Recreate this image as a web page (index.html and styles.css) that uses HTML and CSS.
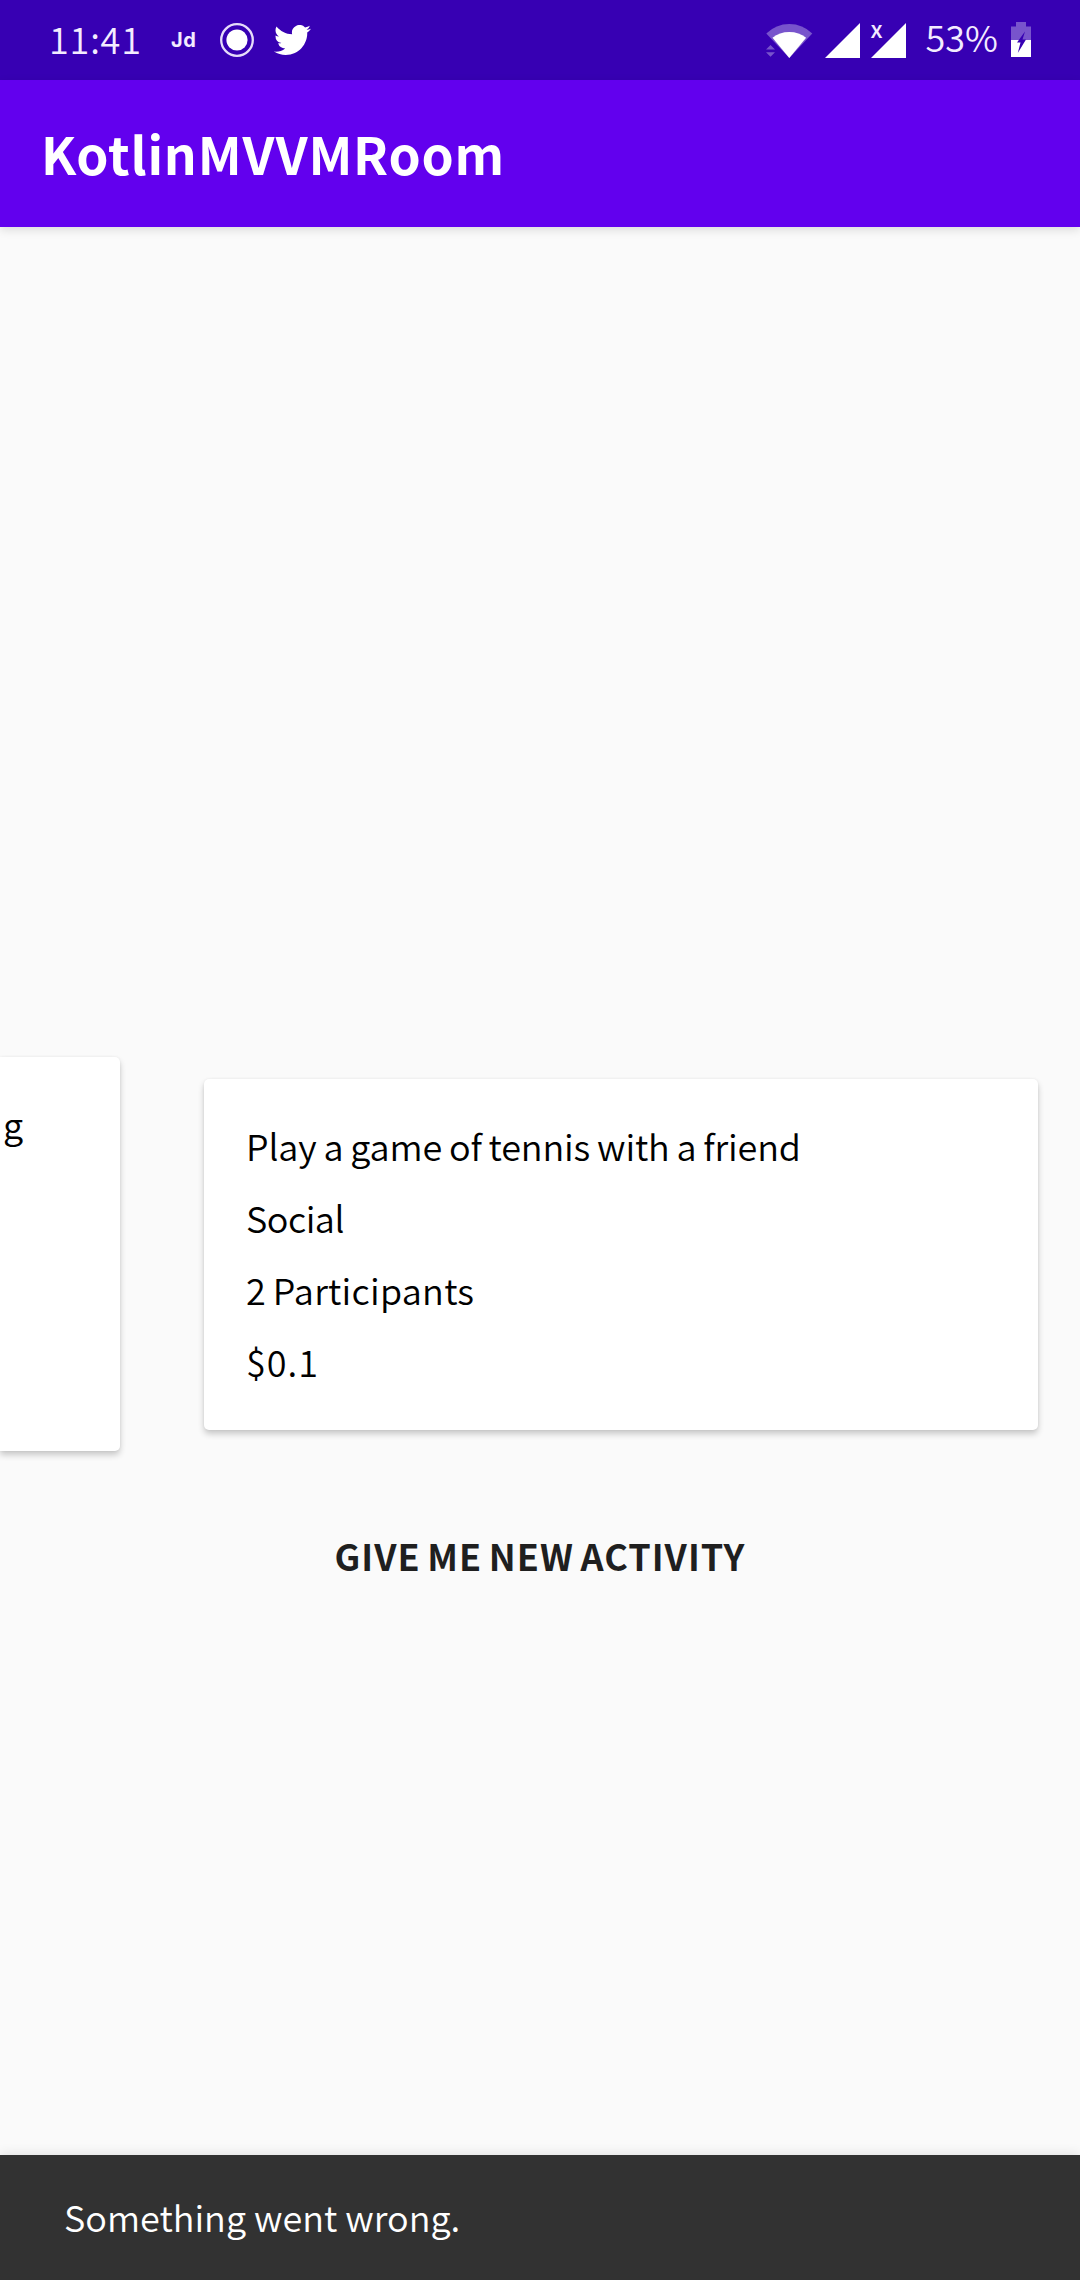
FILE: index.html
```html
<!DOCTYPE html>
<html lang="en">
<head>
<meta charset="utf-8">
<title>KotlinMVVMRoom</title>
<link rel="stylesheet" href="styles.css">
</head>
<body>
<div class="screen">
  <div class="status-bar">
    <span class="clock">11:41</span>
    <span class="jd">Jd</span>
    <svg class="icon-record" width="36" height="36" viewBox="0 0 36 36"><circle cx="18" cy="18" r="15.8" fill="none" stroke="#e6dcfa" stroke-width="2.3"/><circle cx="18" cy="18" r="10.6" fill="#fff"/></svg>
    <svg class="icon-twitter" width="37" height="30" viewBox="0 2.2 24 19.6" preserveAspectRatio="none"><path fill="#fff" d="M23.953 4.57a10 10 0 01-2.825.775 4.958 4.958 0 002.163-2.723c-.951.555-2.005.959-3.127 1.184a4.92 4.92 0 00-8.384 4.482C7.69 8.095 4.067 6.13 1.64 3.162a4.822 4.822 0 00-.666 2.475c0 1.71.87 3.213 2.188 4.096a4.904 4.904 0 01-2.228-.616v.06a4.923 4.923 0 003.946 4.827 4.996 4.996 0 01-2.212.085 4.936 4.936 0 004.604 3.417 9.867 9.867 0 01-6.102 2.105c-.39 0-.779-.023-1.17-.067a13.995 13.995 0 007.557 2.209c9.053 0 13.998-7.496 13.998-13.985 0-.21 0-.42-.015-.63A9.935 9.935 0 0024 4.59z"/></svg>
    <div class="status-right">
      <svg class="icon-wifi" width="48" height="36" viewBox="0 0 48 36"><path fill="#fff" fill-opacity=".33" d="M1.3 11.5Q11 2 24.3 2T47.3 11.5L24.3 36Z"/><path fill="#fff" d="M7.5 15.7Q14.5 10 24.3 10T41.1 15.7L24.3 36Z"/><path fill="#fff" fill-opacity=".33" d="M1 27.5 5.5 23 10 27.5ZM1 30.3H10L5.5 34.8Z"/></svg>
      <svg class="icon-signal" width="35" height="35" viewBox="0 0 35 35"><path fill="#fff" d="M35 0V35H0Z"/></svg>
      <div class="sim">
        <svg width="35" height="35" viewBox="0 0 35 35"><path fill="#fff" d="M35 0V35H0Z"/></svg>
        <span class="no-service">x</span>
      </div>
      <span class="percent">53%</span>
      <svg class="icon-battery" width="20" height="35" viewBox="0 0 20 35"><path fill="#fff" fill-opacity=".33" d="M0 4.5H5V0H15V4.5H20V18H0Z"/><path fill="#fff" d="M0 18H20V35H0Z"/><path fill="#3700b3" d="M14 9.5 6 20.5H9.5L6.8 31 15 17.5H11.5Z"/></svg>
    </div>
  </div>
  <header class="app-bar"><h1>KotlinMVVMRoom</h1></header>
  <main class="content">
    <div class="carousel">
      <section class="card card-previous"><p>g</p></section>
      <section class="card card-current">
        <p class="activity">Play a game of tennis with a friend</p>
        <p class="type">Social</p>
        <p class="people">2 Participants</p>
        <p class="price">$0.1</p>
      </section>
    </div>
    <button class="new-activity">GIVE ME NEW ACTIVITY</button>
  </main>
  <div class="snackbar">Something went wrong.</div>
</div>
</body>
</html>
```
FILE: styles.css
```css
* { box-sizing: border-box; }
body {
  margin: 0;
  font: 350 36px/72px "Noto Sans CJK SC", "Noto Sans", sans-serif;
  color: #000;
}
h1, p { margin: 0; }
svg { display: block; flex: none; }
.screen {
  width: 1080px;
  height: 2280px;
  display: flex;
  flex-direction: column;
  background: #fafafa;
  overflow: hidden;
}
.status-bar {
  height: 80px;
  flex: none;
  display: flex;
  align-items: center;
  padding: 0 49px;
  background: #3700b3;
  color: #f3ecff;
}
.clock { width: 122px; letter-spacing: .8px; line-height: 80px; margin-top: -5px; }
.jd { width: 48px; font: 700 20px/80px Inter, "Noto Sans", sans-serif; letter-spacing: .6px; }
.icon-twitter { margin-left: 19px; }
.status-right { display: flex; margin-left: auto; align-items: flex-start; height: 80px; }
.icon-wifi { margin: 22px 12px 0 0; }
.icon-signal { margin: 22.5px 11px 0 0; }
.sim { position: relative; margin: 22.5px 20px 0 0; }
.no-service {
  position: absolute;
  left: 0;
  top: -7px;
  font-weight: 500;
  font-size: 23px;
  line-height: 24px;
}
.percent { width: 85.5px; line-height: 73px; white-space: nowrap; }
.icon-battery { margin-top: 22px; }
.app-bar {
  height: 147px;
  flex: none;
  padding: 36px 41px 0;
  background: #6200ee;
  color: #fff;
  box-shadow: 0 3px 9px rgba(0, 0, 0, .12);
}
.app-bar h1 { font-size: 51.5px; line-height: 73px; font-weight: 700; letter-spacing: .8px; }
.content { flex: 1; display: flex; flex-direction: column; align-items: center; padding-top: 830px; }
.carousel { width: 1080px; height: 394px; display: flex; align-items: center; gap: 84px; }
.card {
  background: #fff;
  border-radius: 5px;
  box-shadow: 0 4px 6px rgba(0, 0, 0, .2), 0 0 3px rgba(0, 0, 0, .06);
}
.card-previous { width: 120px; height: 394px; padding: 30px 3px; border-radius: 0 5px 5px 0; }
.card-current { width: 834px; height: 351px; padding: 30px 42px 33px; }
.activity { letter-spacing: -.15px; word-spacing: -1px; }
.type { letter-spacing: -.5px; }
.people { letter-spacing: .25px; word-spacing: -1.5px; }
.price { letter-spacing: 1px; }
.new-activity {
  margin-top: 68px;
  padding: 0;
  border: 0;
  background: none;
  color: #1f1f1f;
  font: inherit;
  font-weight: 700;
  letter-spacing: 1px;
  word-spacing: -2.5px;
}
.snackbar {
  height: 125px;
  flex: none;
  padding: 25px 64px;
  background: #323232;
  color: #fff;
  box-shadow: 0 0 12px rgba(0, 0, 0, .12);
}
```
